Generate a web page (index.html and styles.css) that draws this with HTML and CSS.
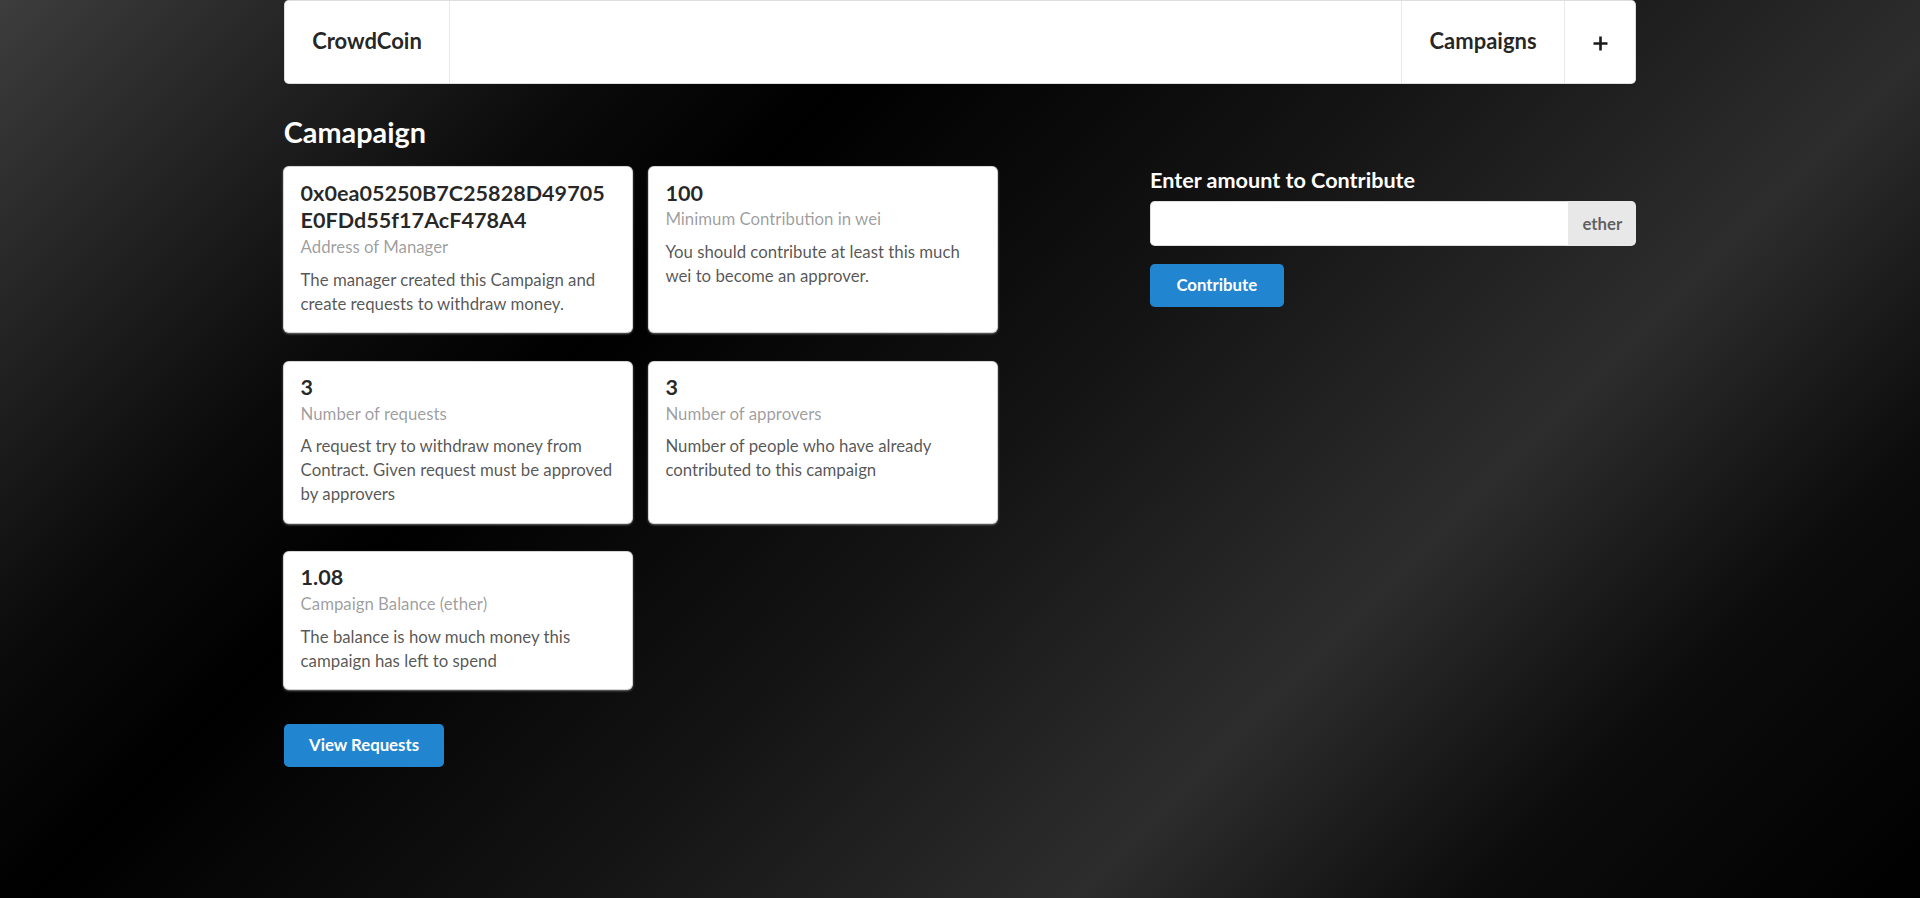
FILE: index.html
```html
<!DOCTYPE html>
<html lang="en">
<head>
<meta charset="utf-8">
<title>CrowdCoin - Campaign</title>
<link rel="stylesheet" href="styles.css">
</head>
<body>
<div class="container">
  <nav class="menu">
    <a class="item brand">CrowdCoin</a>
    <div class="right-menu">
      <a class="item">Campaigns</a>
      <a class="item plus-item" aria-label="Add campaign">
        <svg class="plus-icon" width="15" height="15" viewBox="0 0 15 15"><path d="M7.5 0.5V14.5M0.5 7.5H14.5" stroke="#1a1a1a" stroke-width="2.6" fill="none"/></svg>
      </a>
    </div>
  </nav>

  <h2 class="title">Camapaign</h2>

  <div class="grid">
    <div class="left-col">
      <div class="cards">
        <div class="card">
          <div class="content">
            <div class="header addr">0x0ea05250B7C25828D49705E0FDd55f17AcF478A4</div>
            <div class="meta">Address of Manager</div>
            <div class="description">The manager created this Campaign and create requests to withdraw money.</div>
          </div>
        </div>
        <div class="card">
          <div class="content">
            <div class="header">100</div>
            <div class="meta">Minimum Contribution in wei</div>
            <div class="description">You should contribute at least this much wei to become an approver.</div>
          </div>
        </div>
        <div class="card">
          <div class="content">
            <div class="header">3</div>
            <div class="meta">Number of requests</div>
            <div class="description">A request try to withdraw money from Contract. Given request must be approved by approvers</div>
          </div>
        </div>
        <div class="card">
          <div class="content">
            <div class="header">3</div>
            <div class="meta">Number of approvers</div>
            <div class="description">Number of people who have already contributed to this campaign</div>
          </div>
        </div>
        <div class="card">
          <div class="content">
            <div class="header">1.08</div>
            <div class="meta">Campaign Balance (ether)</div>
            <div class="description">The balance is how much money this campaign has left to spend</div>
          </div>
        </div>
      </div>
      <button class="btn btn-requests" type="button">View Requests</button>
    </div>

    <div class="right-col">
      <form class="form">
        <label class="field-label">Enter amount to Contribute</label>
        <div class="labeled-input">
          <input type="text">
          <div class="input-label">ether</div>
        </div>
        <button class="btn btn-contribute" type="button">Contribute</button>
      </form>
    </div>
  </div>
</div>
</body>
</html>
```

FILE: styles.css
```css
* {
  box-sizing: border-box;
}

html, body {
  margin: 0;
  padding: 0;
  min-height: 100%;
}

body {
  min-height: 898px;
  font-family: Lato, "Helvetica Neue", Arial, sans-serif;
  font-size: 16.8px;
  line-height: 24px;
  color: rgba(0, 0, 0, 0.87);
  background: linear-gradient(135deg, #3d3d3d 0%, #0a0a0a 24%, #000 33%, #141414 52%, #2d2d2d 70%, #0c0c0c 84%, #000 100%);
}

.container {
  width: 1352.4px;
  margin: 0 auto;
}

/* ---------- Menu ---------- */
.menu {
  display: flex;
  height: 84px;
  background: #fff;
  border: 1px solid rgba(34, 36, 38, 0.15);
  border-radius: 4.8px;
  box-shadow: 0 1px 2px 0 rgba(34, 36, 38, 0.15);
}

.item {
  display: flex;
  align-items: center;
  padding: 0 27.4px 2px;
  font-size: 22px;
  line-height: 24px;
  font-weight: 700;
  color: rgba(0, 0, 0, 0.87);
  text-decoration: none;
  cursor: pointer;
}

.brand {
  border-right: 1px solid rgba(34, 36, 38, 0.1);
}

.right-menu {
  display: flex;
  margin-left: auto;
}

.right-menu .item {
  border-left: 1px solid rgba(34, 36, 38, 0.1);
}

.plus-item {
  padding: 2px 27.6px 0;
}

.plus-icon {
  display: block;
}

/* ---------- Title ---------- */
.title {
  margin: 29.7px 0 16.8px;
  font-size: 28.8px;
  line-height: 37px;
  font-weight: 700;
  color: #fff;
}

/* ---------- Grid ---------- */
.grid {
  display: flex;
  gap: 33.6px;
}

.left-col {
  width: 832.65px;
  flex: none;
}

.right-col {
  flex: 1;
  min-width: 0;
}

/* ---------- Cards ---------- */
.cards {
  display: flex;
  flex-wrap: wrap;
  column-gap: 16.8px;
  row-gap: 29.4px;
}

.card {
  width: 348px;
  background: #fff;
  border-radius: 4.8px;
  box-shadow: 0 1px 3px 0 #d4d4d5, 0 0 0 1px #d4d4d5;
}

.content {
  padding: 16.8px;
}

.header {
  margin-top: -4.63px;
  font-size: 21.6px;
  line-height: 27.77px;
  font-weight: 700;
  color: rgba(0, 0, 0, 0.85);
}

.addr {
  overflow-wrap: anywhere;
}

.meta {
  font-size: 16.8px;
  line-height: 24px;
  color: rgba(0, 0, 0, 0.4);
}

.description {
  margin-top: 8.4px;
  font-size: 16.8px;
  line-height: 24px;
  color: rgba(0, 0, 0, 0.68);
}

/* ---------- Buttons ---------- */
.btn {
  display: inline-block;
  padding: 13.2px 25.2px;
  font-family: Lato, "Helvetica Neue", Arial, sans-serif;
  font-size: 16.8px;
  line-height: 16.8px;
  font-weight: 700;
  color: #fff;
  background: #2185d0;
  border: 0;
  border-radius: 4.8px;
  cursor: pointer;
}

.btn-requests {
  margin-top: 34.5px;
}

.btn-contribute {
  margin-top: 17.6px;
  padding-left: 26.4px;
  padding-right: 26.4px;
}

/* ---------- Form ---------- */
.form {
  display: flex;
  flex-direction: column;
  align-items: flex-start;
}

.field-label {
  display: block;
  margin-bottom: 5.6px;
  font-size: 21.6px;
  line-height: 27.77px;
  font-weight: 700;
  color: #fff;
}

.labeled-input {
  display: flex;
  width: 100%;
  height: 45.6px;
}

.labeled-input input {
  flex: 1;
  min-width: 0;
  height: 100%;
  margin: 0;
  padding: 0 16.8px;
  font-family: Lato, "Helvetica Neue", Arial, sans-serif;
  font-size: 16.8px;
  color: rgba(0, 0, 0, 0.87);
  background: #fff;
  border: 1px solid rgba(34, 36, 38, 0.15);
  border-right-color: transparent;
  border-radius: 4.8px 0 0 4.8px;
  outline: none;
}

.input-label {
  display: flex;
  align-items: center;
  padding: 0 14px;
  font-size: 16.8px;
  font-weight: 700;
  color: rgba(0, 0, 0, 0.6);
  background: #e8e8e8;
  border-radius: 0 4.8px 4.8px 0;
}
```
